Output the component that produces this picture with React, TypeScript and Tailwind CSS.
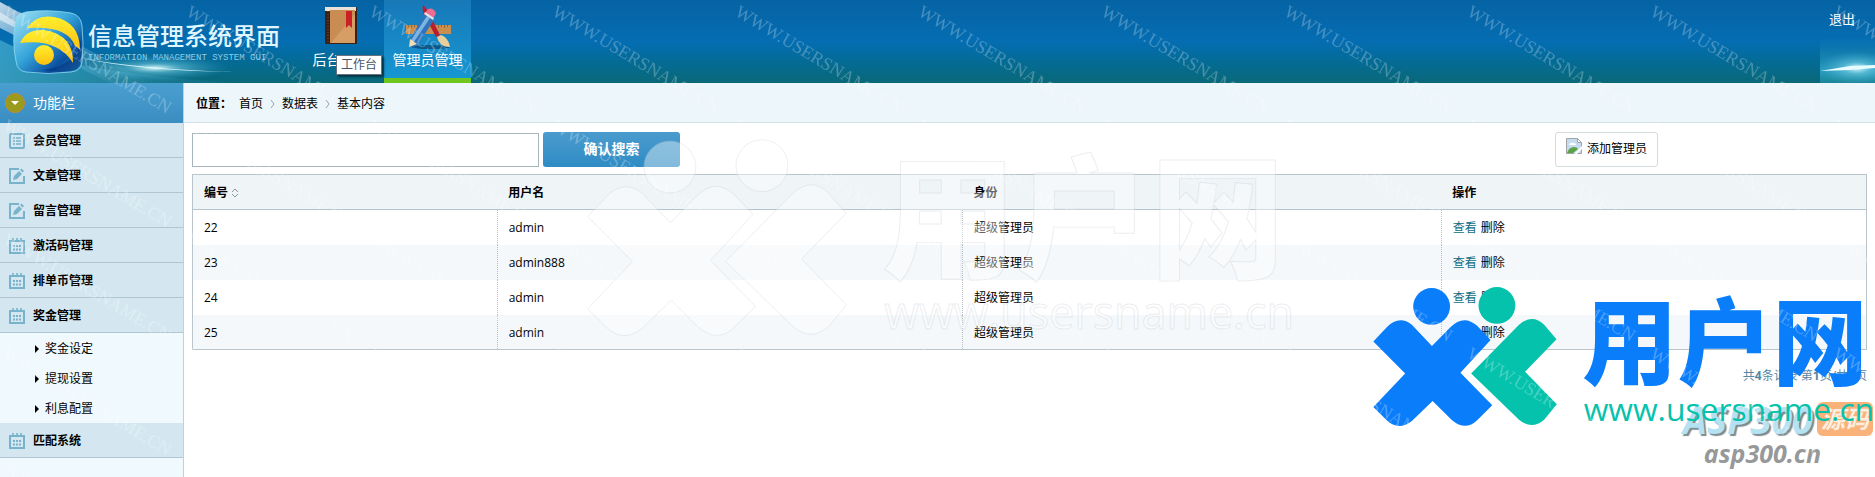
import React from 'react';
import clsx from 'clsx';

const menu = [
  { title: '会员管理', icon: 'list' },
  { title: '文章管理', icon: 'edit' },
  { title: '留言管理', icon: 'edit' },
  { title: '激活码管理', icon: 'calendar' },
  { title: '排单币管理', icon: 'calendar' },
  { title: '奖金管理', icon: 'calendar', children: ['奖金设定', '提现设置', '利息配置'] },
  { title: '匹配系统', icon: 'calendar' }
];

const admins = [
  { id: 22, name: 'admin', role: '超级管理员' },
  { id: 23, name: 'admin888', role: '超级管理员' },
  { id: 24, name: 'admin', role: '超级管理员' },
  { id: 25, name: 'admin', role: '超级管理员' }
];

const MenuIcon = ({ name }: { name: string }) => (
  <svg viewBox="0 0 16 16" className="h-4 w-4 shrink-0 text-[#78b3cb]" fill="none" stroke="currentColor" strokeWidth="2">
    {name === 'list' && (
      <>
        <rect x="1" y="1" width="14" height="14" rx="1" />
        <path d="M4 5h2M7 5h5M4 8h2M7 8h5M4 11h2M7 11h5" strokeWidth="1.5" />
      </>
    )}
    {name === 'edit' && (
      <>
        <path d="M10 1H1v14h14V8" />
        <path d="M4 12l1-4 5-5 3 3-5 5z" fill="currentColor" stroke="none" />
        <path d="M11 2l1.5-1.5L15 3l-1.5 1.5z" fill="currentColor" stroke="none" />
      </>
    )}
    {name === 'calendar' && (
      <>
        <path d="M1 3h14v12H1z" strokeWidth="2" />
        <path d="M4 0v4M8 0v4M12 0v4" strokeWidth="1.6" />
        <path d="M4 8h2M7 8h2M10 8h2M4 11.5h2M7 11.5h2M10 11.5h2" strokeWidth="2" />
      </>
    )}
  </svg>
);

const HeaderGlow = () => (
  <svg viewBox="0 0 300 83" className="absolute left-0 top-0 h-full w-[300px]" aria-hidden="true">
    <defs>
      <linearGradient id="beam" x1="0" y1="0" x2="1" y2="1">
        <stop offset="0" stopColor="#fff" stopOpacity="0.75" />
        <stop offset="0.5" stopColor="#bfe6f7" stopOpacity="0.25" />
        <stop offset="1" stopColor="#bfe6f7" stopOpacity="0" />
      </linearGradient>
      <radialGradient id="flare">
        <stop offset="0" stopColor="#eaffff" stopOpacity="0.95" />
        <stop offset="0.35" stopColor="#7fd6ea" stopOpacity="0.5" />
        <stop offset="1" stopColor="#3aa9cf" stopOpacity="0" />
      </radialGradient>
      <linearGradient id="fade" x1="0" y1="0" x2="1" y2="0">
        <stop offset="0" stopColor="#3fa6cc" stopOpacity="0.8" />
        <stop offset="1" stopColor="#3fa6cc" stopOpacity="0" />
      </linearGradient>
    </defs>
    <path d="M0 40 Q60 72 240 83H0z" fill="url(#fade)" />
    <path d="M0 2L150 83H110L0 28z" fill="url(#beam)" />
    <path d="M0 12L60 50 0 20z" fill="#fff" fillOpacity="0.5" />
    <ellipse cx="155" cy="68" rx="75" ry="13" fill="url(#flare)" />
    <path d="M80 58Q140 71 235 72Q140 69 80 58z" fill="#e4fbff" fillOpacity="0.85" />
  </svg>
);

const Logo = () => (
  <svg viewBox="0 0 72 66" className="h-[66px] w-[72px] shrink-0" aria-hidden="true">
    <defs>
      <linearGradient id="tile" x1="0" y1="0" x2="1" y2="1">
        <stop offset="0" stopColor="#a5e4f5" />
        <stop offset="0.45" stopColor="#35a5da" />
        <stop offset="0.75" stopColor="#0b4f9f" />
        <stop offset="1" stopColor="#2aa3c9" />
      </linearGradient>
      <linearGradient id="sun" x1="0" y1="0" x2="0" y2="1">
        <stop offset="0" stopColor="#ffee2e" />
        <stop offset="1" stopColor="#fdc00f" />
      </linearGradient>
    </defs>
    <path d="M14 2Q36-1 59 3Q69 5 70 16Q72 34 70 52Q69 61 59 62Q36 65 14 62Q5 61 4 51Q0 33 3 14Q4 4 14 2z" fill="url(#tile)" stroke="#8fdcf0" strokeOpacity="0.8" />
    <path d="M30 60Q64 56 69 30V50Q68 61 58 61Q44 63 30 60z" fill="#06347f" fillOpacity="0.6" />
    <path d="M15 18Q24 4 42 7Q68 12 68 40Q66 37 63 36Q56 15 15 18z" fill="url(#sun)" />
    <path d="M8 33Q14 19 32 20Q62 25 61 53Q46 28 8 33z" fill="url(#sun)" />
    <circle cx="32" cy="45" r="10" fill="url(#sun)" />
  </svg>
);

const BookIcon = () => (
  <svg viewBox="0 0 36 42" className="h-[42px] w-9" aria-hidden="true">
    <rect x="2" y="3" width="32" height="37" rx="1" fill="#3a2015" />
    <rect x="2" y="3" width="31" height="4" fill="#e9e2d8" />
    <rect x="7" y="6" width="25" height="33" fill="#c98d54" />
    <path d="M8 39L32 10v29z" fill="#dca46c" fillOpacity="0.7" />
    <path d="M5 7v32" stroke="#7b5236" strokeWidth="1" strokeDasharray="1 2" />
    <path d="M23 7h6v17l-3-3-3 3z" fill="#cc2027" />
  </svg>
);

const ToolsIcon = () => (
  <svg viewBox="0 0 48 46" className="h-[46px] w-12" aria-hidden="true">
    <ellipse cx="27" cy="43" rx="19" ry="2" fill="#03365f" fillOpacity="0.6" />
    <rect x="2" y="21" width="45" height="9" fill="#c98f4e" />
    <path d="M4.5 21v2M7.5 21v3M10.5 21v2M13.5 21v3M34.5 21v3M37.5 21v2M40.5 21v3M43.5 21v2" stroke="#8d5d2a" strokeWidth="0.8" />
    <path d="M19 1q4 3 8 12l9 18-4 2-9-17Q17 7 19 1z" fill="#b71f2e" />
    <path d="M33 33l4-2q7 2 9 12-11 0-13-10z" fill="#e9cf9c" />
    <path d="M21 10l9 6-17 26-8 1 1-8z" fill="#2f74bd" />
    <path d="M23 12l3 2L10 38l-3-2z" fill="#7eb3e2" />
    <path d="M6 35l7 5-8 3z" fill="#f1ddb0" />
    <path d="M21 9l3-4q5-2 8 4l-3 6z" fill="#ee6c8f" />
    <path d="M20 10l9 6 1-2-9-6z" fill="#dfe6ec" />
  </svg>
);

const ExitGlow = () => (
  <svg viewBox="0 0 55 83" className="absolute right-0 top-0 h-full w-[55px]" aria-hidden="true">
    <defs>
      <linearGradient id="exitBg" x1="0" y1="0" x2="0" y2="1">
        <stop offset="0.45" stopColor="#1d86bd" stopOpacity="0" />
        <stop offset="0.85" stopColor="#2ba0c4" stopOpacity="0.9" />
        <stop offset="1" stopColor="#1a8598" />
      </linearGradient>
    </defs>
    <rect width="55" height="83" fill="url(#exitBg)" />
    <ellipse cx="37" cy="68" rx="40" ry="17" fill="url(#flare)" />
    <path d="M0 71L30 66 55 65V68L30 70z" fill="#e6fcff" />
  </svg>
);

const BrandMark = ({ faint, className }: { faint?: boolean; className?: string }) => (
  <svg viewBox="60 40 1508 470" className={className} aria-hidden="true">
    <g className={faint ? 'fill-white stroke-gray-300' : ''} strokeWidth={faint ? 2 : 0}>
      <g fill={faint ? undefined : '#0a7dfa'}>
        <circle cx="244" cy="110" r="55" />
        <path d="M70 215L110 172Q147 135 185 165L245 228 300 172Q340 132 380 168L420 210 330 308 425 405 380 450Q345 483 305 450L247 392 185 452Q145 483 110 450L70 410 165 310z" />
        <text x="694" y="324" fontSize="284" fontWeight="900" fontFamily='"Noto Sans CJK SC", sans-serif'>用户网</text>
      </g>
      <g fill={faint ? undefined : '#04c2ac'}>
        <circle cx="439" cy="107" r="55" />
        <path d="M362 310L505 165Q545 130 580 165L617 208 523 305 618 402 580 448Q543 480 505 448z" />
        <text x="698" y="453" fontSize="95" fontFamily='"Open Sans", sans-serif'>www.usersname.cn</text>
      </g>
    </g>
  </svg>
);

const Watermark = () => (
  <svg className="pointer-events-none absolute inset-0 h-full w-full" aria-hidden="true">
    <defs>
      <pattern id="wm" x="0" y="2" width="183" height="114" patternUnits="userSpaceOnUse">
        <text x="0" y="0" transform="translate(2 13) rotate(31)" fontSize="18" fill="#fff" fillOpacity="0.25" fontFamily='"Liberation Serif", serif'>
          WWW.USERSNAME.CN
        </text>
      </pattern>
    </defs>
    <rect width="100%" height="100%" fill="url(#wm)" />
  </svg>
);

const Header = () => (
  <header className="relative flex h-[83px] bg-linear-to-b from-[#0563a4] via-[#056db2] to-[#0a6878] text-white">
    <HeaderGlow />
    <ExitGlow />
    <div className="relative flex w-[297px] gap-1 pl-3 pt-2.5">
      <Logo />
      <div className="pt-2.5">
        <h1 className="whitespace-nowrap text-2xl font-medium leading-8 text-[#dff6ff]">信息管理系统界面</h1>
        <p className="whitespace-nowrap font-['Liberation_Mono'] text-[9px] leading-3 text-[#8ccbe6]">INFORMATION MANAGEMENT SYSTEM GUI</p>
      </div>
    </div>
    <nav className="relative flex text-sm leading-5">
      <a href="#" className="flex w-[87px] flex-col items-center pt-1">
        <BookIcon />
        <span className="mt-1 w-14">后台</span>
      </a>
      <a href="#" className="flex w-[87px] flex-col items-center border-b-5 border-[#6fc61c] bg-linear-to-b from-[#1878b8] to-[#1597d2] pt-1">
        <ToolsIcon />
        <span>管理员管理</span>
      </a>
      <div role="tooltip" className="absolute left-[39px] top-[55px] border border-gray-500 bg-white px-1 text-xs leading-[18px] text-gray-600 shadow-[2px_2px_2px_rgba(0,0,0,0.5)]">
        工作台
      </div>
    </nav>
    <a href="#" className="relative ml-auto mr-5 mt-2.5 text-[13px] leading-[18px]">退出</a>
  </header>
);

const Sidebar = () => (
  <aside className="w-[184px] shrink-0 border-r border-[#b7d5df] bg-[#f0f9fd]">
    <h2 className="flex h-10 items-center gap-2 bg-linear-to-b from-[#4a9fd1] to-[#3a8dc0] pl-[5px] text-sm text-white">
      <svg viewBox="0 0 20 20" className="h-5 w-5" aria-hidden="true">
        <circle cx="10" cy="10" r="9.5" fill="#9a9a1d" stroke="#c58a2c" />
        <path d="M6 8h8l-4 4z" fill="#fff" />
      </svg>
      功能栏
    </h2>
    <ul>
      {menu.map((item) => (
        <li key={item.title}>
          <a href="#" className="flex h-[35px] items-center gap-2 border-b border-[#b0c6d0] bg-[#d4e7f0] pl-[9px] pt-0.5 font-bold">
            <MenuIcon name={item.icon} />
            {item.title}
          </a>
          {item.children && (
            <ul>
              {item.children.map((child) => (
                <li key={child}>
                  <a href="#" className="flex h-[30px] items-center gap-1.5 pl-[35px] pt-0.5">
                    <svg viewBox="0 0 4 8" className="h-2 w-1" aria-hidden="true"><path d="M0 0l4 4-4 4z" /></svg>
                    {child}
                  </a>
                </li>
              ))}
            </ul>
          )}
        </li>
      ))}
    </ul>
  </aside>
);

const Crumbs = () => (
  <div className="flex h-10 items-center border-b border-[#d2e0e9] bg-[#edf6fb] pl-3 pt-0.5">
    <span className="mr-[7px] font-bold">位置：</span>
    {['首页', '数据表', '基本内容'].map((crumb, i) => (
      <React.Fragment key={crumb}>
        {i > 0 && (
          <svg viewBox="0 0 5 8" className="mx-[7px] h-2 w-[5px]" fill="none" stroke="#9aa5ab" aria-hidden="true"><path d="M1 0l3 4-3 4" /></svg>
        )}
        <a href="#">{crumb}</a>
      </React.Fragment>
    ))}
  </div>
);

const AdminTable = () => (
  <table className="mt-[7px] w-full table-fixed border border-[#b9c5cb] text-left">
    <thead>
      <tr className="h-[35px] border-b border-[#b4c4cc] bg-[#eff4f7]">
        <th className="w-[18.2%] pl-[11px] pt-0.5">
          编号
          <svg viewBox="0 0 8 10" className="ml-[3px] inline h-2.5 w-2 align-[-1px]" fill="none" stroke="#8b979d" aria-hidden="true"><path d="M1 4l3-3 3 3M1 6l3 3 3-3" /></svg>
        </th>
        <th className="w-[27.8%] pl-[11px] pt-0.5">用户名</th>
        <th className="w-[28.6%] pl-[11px] pt-0.5">身份</th>
        <th className="pl-[11px] pt-0.5">操作</th>
      </tr>
    </thead>
    <tbody>
      {admins.map((admin, i) => (
        <tr key={admin.id} className={clsx('h-[35px]', i % 2 === 1 && 'bg-[#f4f8fa]')}>
          <td className="border-r border-dotted border-[#b5c0c6] pl-[11px] pt-0.5">{admin.id}</td>
          <td className="border-r border-dotted border-[#b5c0c6] pl-[11px] pt-0.5">{admin.name}</td>
          <td className="border-r border-dotted border-[#b5c0c6] pl-[11px] pt-0.5">{admin.role}</td>
          <td className="pl-[11px] pt-0.5">
            <a href="#" className="mr-1 text-[#0f6d82]">查看</a>
            <a href="#">删除</a>
          </td>
        </tr>
      ))}
    </tbody>
  </table>
);

export default function App() {
  return (
    <div className="relative flex min-h-screen flex-col overflow-hidden bg-white font-['Open_Sans','Noto_Sans_CJK_SC',sans-serif] text-xs text-black">
      <Header />
      <div className="flex flex-1">
        <Sidebar />
        <main className="min-w-0 flex-1">
          <Crumbs />
          <div className="px-2 pt-2">
            <form className="flex items-center gap-1" onSubmit={(e) => e.preventDefault()}>
              <input type="text" aria-label="搜索" className="mt-0.5 h-[34px] w-[347px] border border-[#a7b5bc] px-2" />
              <button type="submit" className="h-[35px] w-[137px] rounded-[3px] bg-linear-to-b from-[#4a9bce] to-[#2e8cc4] text-sm font-bold text-white">
                确认搜索
              </button>
              <button type="button" className="ml-auto mr-[209px] flex h-[35px] items-center gap-[5px] rounded-[3px] border border-[#d3dbde] px-2.5">
                <svg viewBox="0 0 16 16" className="mb-1.5 h-4 w-4" aria-hidden="true">
                  <path d="M.5.5h11l4 4v11H.5z" fill="#c6dbef" stroke="#a0a5a9" />
                  <path d="M11.5 .5v4h4z" fill="#fff" stroke="#a0a5a9" />
                  <path d="M3 7q0-2 2-2 1-1 3 0 2 0 2 2z" fill="#fff" />
                  <path d="M1 15q2-6 7-6 3 0 4 2l-5 4z" fill="#5aa346" />
                  <path d="M8 16l8-8v3l-5 5z" fill="#fff" />
                </svg>
                添加管理员
              </button>
            </form>
            <AdminTable />
            <p className="mt-4 text-right leading-5 text-[#5687a6]">共<b>4</b>条记录 第<b>1</b>页/共<b>1</b>页</p>
          </div>
        </main>
      </div>

      <div className="pointer-events-none absolute bottom-2 right-0 flex flex-col items-end italic">
        <div className="flex items-center gap-1">
          <span className="text-[38px] font-bold leading-9 text-[#b5e2f3] [text-shadow:2px_2px_1px_#7d8a90]">ASP300</span>
          <span className="mr-0.5 rounded-md bg-[#f9b27a] px-1 text-2xl font-bold leading-[34px] text-[#fdeee0]">源码</span>
        </div>
        <span className="mr-[54px] text-[25px] font-bold leading-8 text-[#969899]">asp300.cn</span>
      </div>
      <BrandMark className="pointer-events-none absolute bottom-[37px] right-0 w-[505px]" />
      <BrandMark faint className="pointer-events-none absolute left-[583px] top-[134px] w-[712px] opacity-40" />
      <Watermark />
    </div>
  );
}
